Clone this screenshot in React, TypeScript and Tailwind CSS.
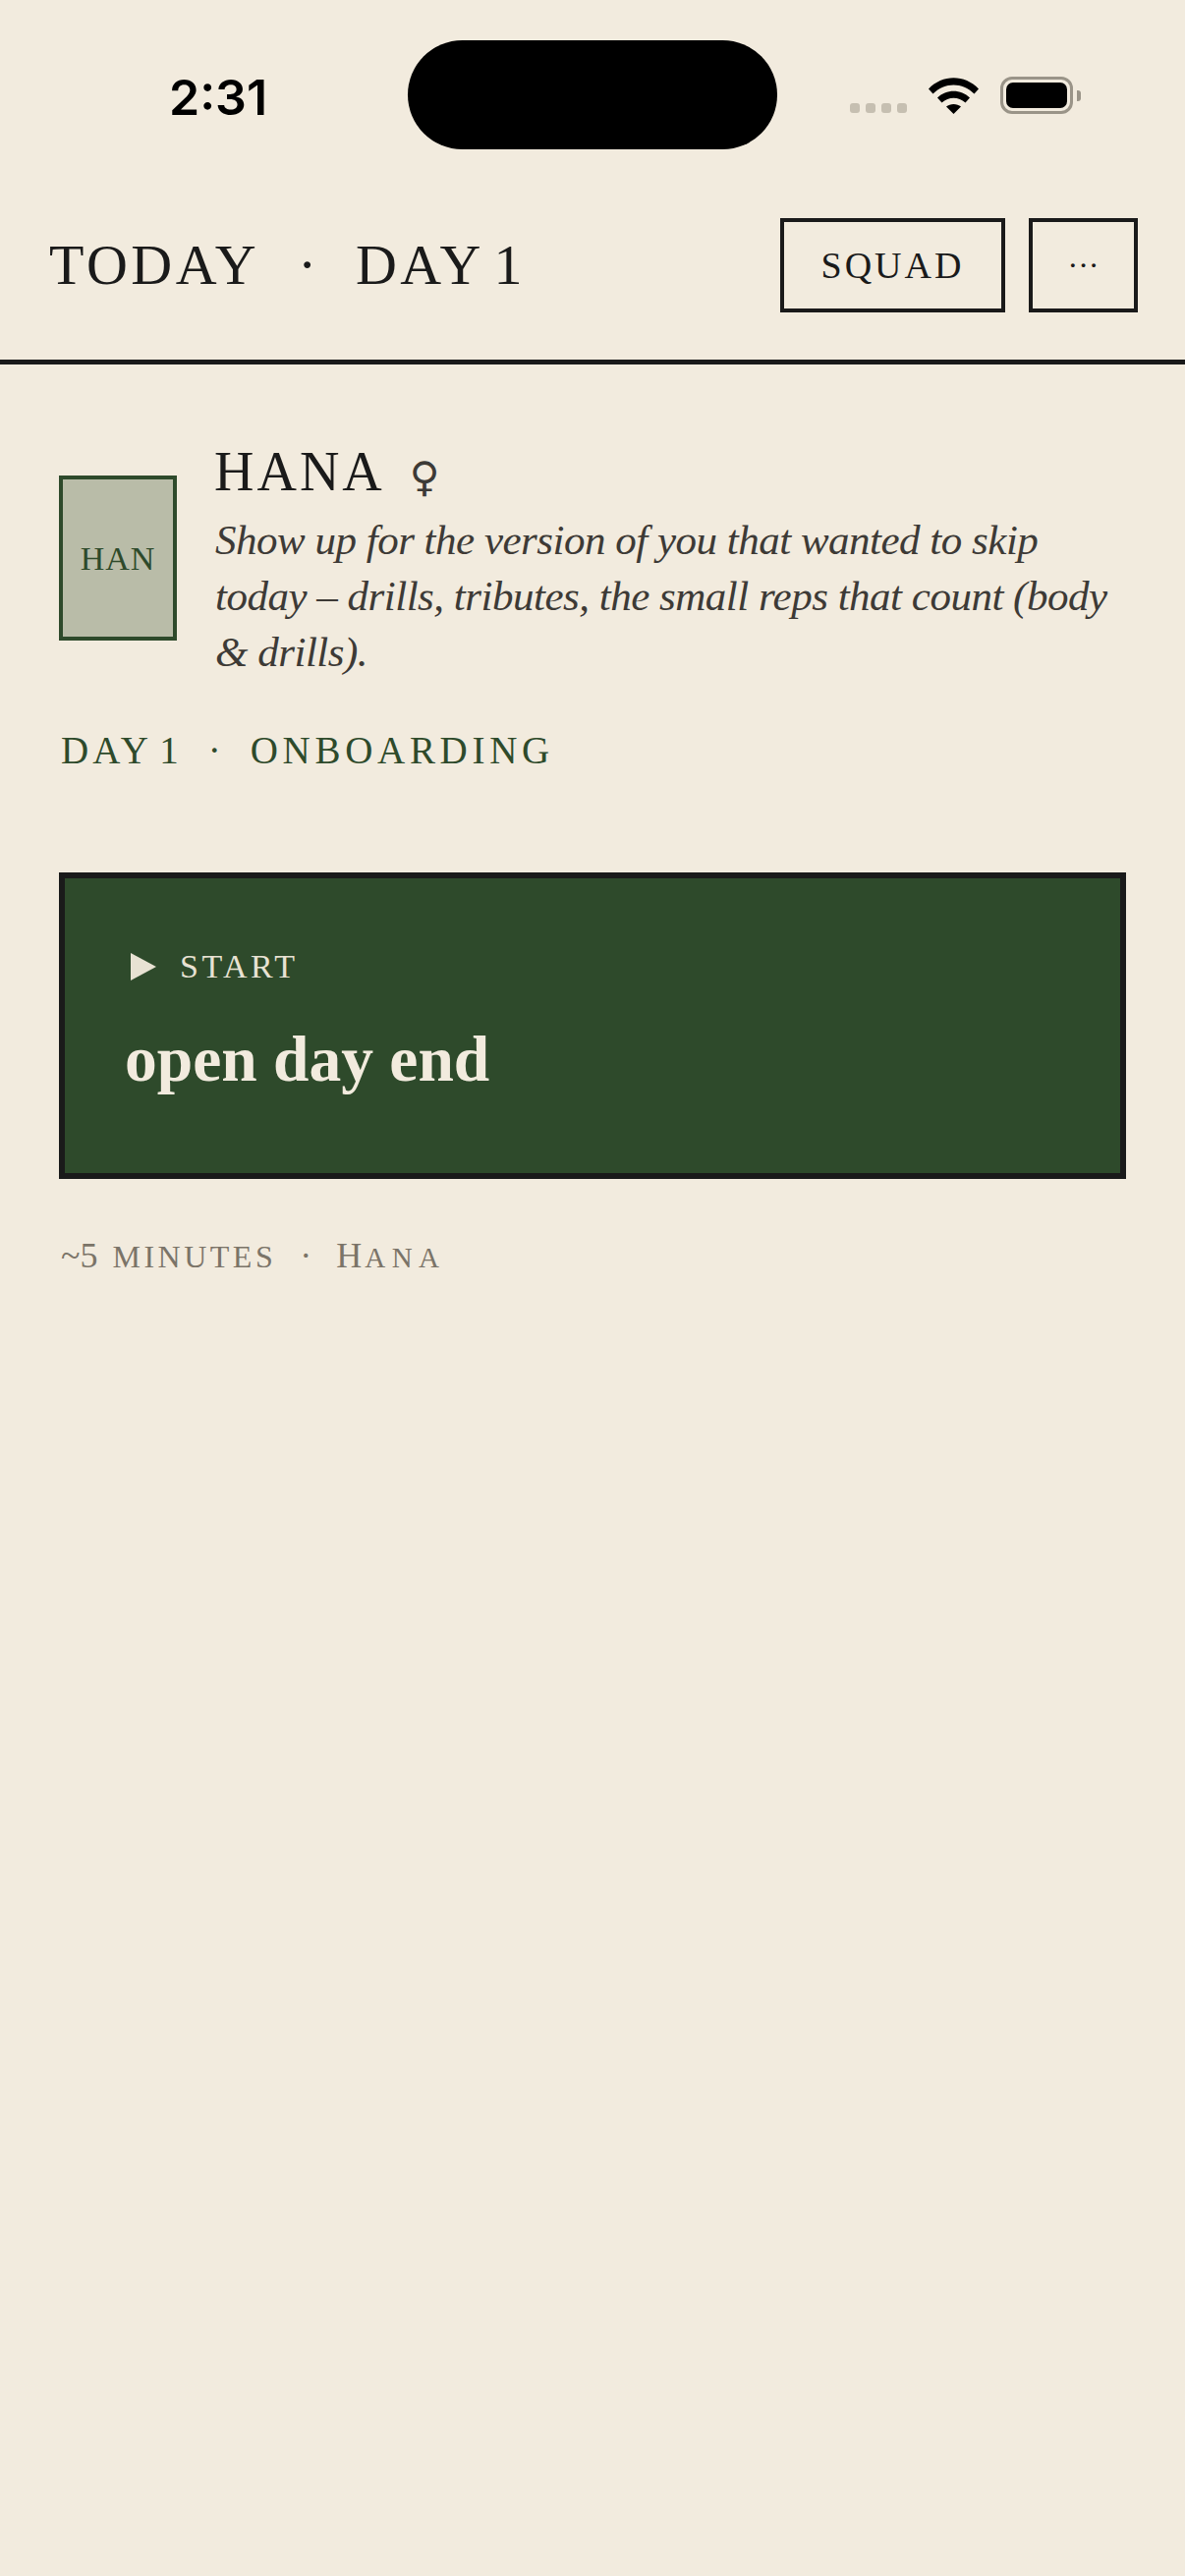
const serif = "font-['Liberation_Serif',serif]";

function WifiIcon() {
  return (
    <svg width="51" height="37" viewBox="0 0 51 37" fill="#000">
      <path d="M0 11.5 C14 -3.5 37 -3.5 51 11.5 L46.5 16.5 C34.5 4.5 16.5 4.5 4.5 16.5 Z" />
      <path d="M9 20.5 C18 11.5 33 11.5 42 20.5 L37.5 25.5 C30.5 19 20.5 19 13.5 25.5 Z" />
      <path d="M18 29.5 C22 26 29 26 33 29.5 L25.5 37 Z" />
    </svg>
  );
}

function StatusBar() {
  return (
    <div className="relative h-[174px] flex items-start justify-between pl-[172px] pr-[106px]">
      <span className="mt-[69px] font-['Inter',sans-serif] font-semibold text-[50px] leading-[60px] text-black">
        2:31
      </span>

      {/* Dynamic island */}
      <div className="absolute left-[415px] top-[41px] w-[376px] h-[111px] rounded-[56px] bg-black"></div>

      <div className="mt-[78px] flex items-end">
        <div className="flex gap-[6px] mb-[1px]">
          {[0, 1, 2, 3].map((i) => (
            <div key={i} className="w-[10px] h-[10px] rounded-[3px] bg-[#c6bfb1]"></div>
          ))}
        </div>
        <div className="ml-[22px] flex">
          <WifiIcon />
        </div>
        <div className="ml-[22px] flex items-center">
          <div className="w-[74px] h-[38px] rounded-[12px] border-[3.5px] border-[#9a9488] p-[3px]">
            <div className="w-full h-full rounded-[7px] bg-black"></div>
          </div>
          <div className="ml-[4px] w-[4px] h-[11px] rounded-r-[3px] bg-[#9a9488]"></div>
        </div>
      </div>
    </div>
  );
}

export default function App() {
  return (
    <div className={`w-[1206px] min-h-[2622px] bg-[#f2ebde] text-[#1a1a1a] ${serif}`}>
      <StatusBar />

      {/* Header */}
      <header className="flex items-center justify-between pl-[50px] pr-[48px] pt-[48px] pb-[48px] border-b-[5px] border-[#1a1a1a]">
        <h1 className="flex items-center text-[58px] leading-none font-normal tracking-[3.5px]">
          <span>TODAY</span>
          <span className="ml-[39px]">·</span>
          <span className="ml-[36px] [word-spacing:-6px]">DAY 1</span>
        </h1>
        <div className="flex gap-[24px]">
          <button className="w-[229px] h-[96px] border-[4.5px] border-[#1a1a1a] text-[38px] tracking-[3px]">
            SQUAD
          </button>
          <button className="w-[111px] h-[96px] border-[4.5px] border-[#1a1a1a] text-[32px]">
            ···
          </button>
        </div>
      </header>

      <main className="px-[60px] pt-[76px]">
        {/* Member row */}
        <div className="flex items-center gap-[40px]">
          <div className="mb-[3px] w-[120px] h-[168px] shrink-0 flex items-center justify-center bg-[#b9bca8] border-[4.5px] border-[#2e4a2b] text-[#2e4a2b] text-[34px] tracking-[1px]">
            HAN
          </div>
          <div className="min-w-0 flex-1">
            <div className="flex items-center gap-[25px]">
              <h2 className="-ml-[2px] text-[56px] leading-[66px] font-normal tracking-[3px]">HANA</h2>
              <span className="mt-[12px] font-['DejaVu_Sans',sans-serif] text-[42px] leading-[48px] text-[#3d3a36]">
                ♀
              </span>
            </div>
            <p className="mt-[8px] -ml-[1px] text-[43px] leading-[57px] italic text-[#3d3a36] tracking-[-0.5px]">
              Show up for the version of you that wanted to skip today – drills, tributes, the small reps that count (body &amp; drills).
            </p>
          </div>
        </div>

        <div className="mt-[48px] pl-[2px] flex items-center text-[#2e4a2b] text-[39px] leading-[48px] tracking-[4px]">
          <span className="[word-spacing:-5px]">DAY 1</span>
          <span className="ml-[26px]">·</span>
          <span className="ml-[26px] tracking-[4.7px]">ONBOARDING</span>
        </div>

        {/* Start card */}
        <button className="mt-[100px] w-full h-[312px] flex flex-col items-start bg-[#2e4a2b] border-[6px] border-[#1a1a1a] pl-[61px] pt-[70px] text-[#f2ebde] text-left">
          <div className="flex items-center gap-[24px] pl-[6px]">
            <div className="w-[26px] h-[28px] bg-[#e8e2d3] [clip-path:polygon(0_0,100%_50%,0_100%)]"></div>
            <span className="text-[34px] leading-[40px] tracking-[3.5px] text-[#e8e2d3]">START</span>
          </div>
          <div className="mt-[34px] text-[65.5px] leading-[80px] font-bold">open day end</div>
        </button>

        <div className="mt-[52px] pl-[2px] flex items-baseline text-[#7b7468] leading-[46px]">
          <span className="text-[36px]">~5</span>
          <span className="ml-[15px] text-[45px] tracking-[3.5px] [font-variant:small-caps]">minutes</span>
          <span className="ml-[24px] text-[36px]">·</span>
          <span className="ml-[25px] text-[36px] tracking-[3px]">
            H<span className="text-[41px] tracking-[6.5px] [font-variant:small-caps]">ana</span>
          </span>
        </div>
      </main>
    </div>
  );
}
